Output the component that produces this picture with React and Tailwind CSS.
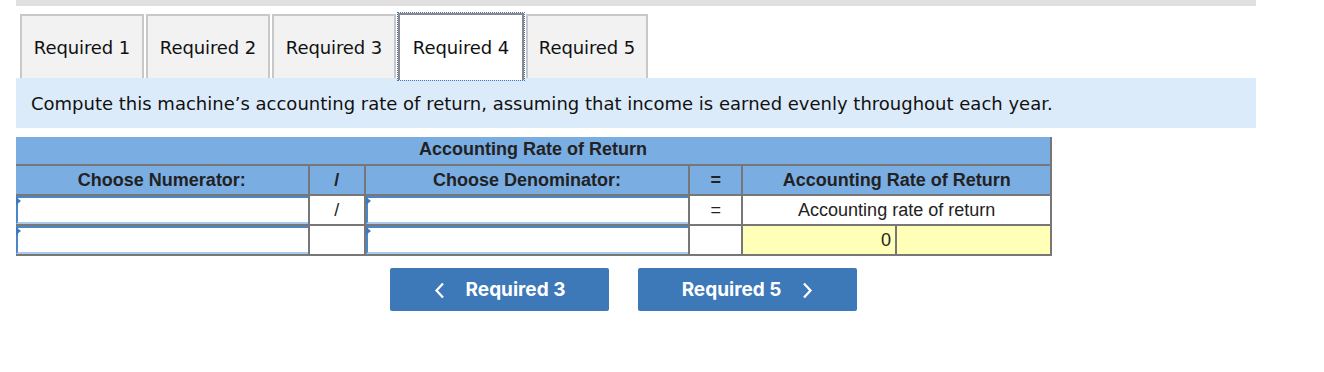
import React from "react";

const tabs = ["Required 1", "Required 2", "Required 3", "Required 4", "Required 5"];
const tabWidths = ["w-[124px]", "w-[124px]", "w-[124px]", "w-[126px]", "w-[122px]"];

function Marker() {
  // little blue triangle on the dropdown cells
  return (
    <span className="absolute left-0 top-[1px] h-0 w-0 border-y-[4px] border-l-[5px] border-y-transparent border-l-[#3d78c0]" />
  );
}

function PickCell({ first }) {
  return (
    <td className={`relative h-[30px] border-2 border-[#777] bg-white p-0 ${first ? "border-l-0" : ""}`}>
      <Marker />
      <div className="h-full w-full border-l-2 border-t-2 border-b-2 border-l-[#4a86c8] border-t-[#4a86c8] border-b-[#a9c8ea]" />
    </td>
  );
}

export default function App() {
  return (
    <div className="h-[372px] w-[1324px] bg-white pl-[16px]">
      <div className="h-[6px] w-[1240px] bg-[#e0e0e0]" />

      {/* Tabs */}
      <div className="mt-[8px] flex gap-[2px] pl-[4px] font-['DejaVu_Sans',Verdana,sans-serif] text-[18px] tracking-[-0.1px] text-[#111]">
        {tabs.map((t, i) =>
          i === 3 ? (
            <div
              key={t}
              className={`relative z-10 -mb-[2px] mt-[-1px] flex h-[67px] items-center justify-center outline-1 outline-dotted outline-[#3d78c8] border-x-2 border-t-2 border-[#888] bg-white ${tabWidths[i]}`}
            >
              {t}
            </div>
          ) : (
            <div
              key={t}
              className={`flex h-[64px] items-center justify-center border-x-2 border-t-2 border-[#c8c8c8] bg-[#f2f2f2] ${tabWidths[i]}`}
            >
              {t}
            </div>
          )
        )}
      </div>

      {/* Instructions */}
      <div className="flex h-[50px] w-[1240px] items-center bg-[#dcebf9] pl-[15px] font-['DejaVu_Sans',Verdana,sans-serif] text-[18px] text-[#111]">
        Compute this machine’s accounting rate of return, assuming that income is earned evenly throughout each year.
      </div>

      {/* Table */}
      <table className="mt-[9px] w-[1036px] border-collapse font-['Liberation_Sans',Arial,sans-serif] text-[18px] leading-none text-[#222]">
        <colgroup>
          <col className="w-[293px]" />
          <col className="w-[56px]" />
          <col className="w-[325px]" />
          <col className="w-[53px]" />
          <col className="w-[154px]" />
          <col className="w-[155px]" />
        </colgroup>
        <tbody>
          <tr className="h-[28px] bg-[#7aade2] font-bold">
            <td colSpan={6} className="border-2 border-[#777] border-l-0 border-t-0 pb-[3px] text-center">
              Accounting Rate of Return
            </td>
          </tr>
          <tr className="h-[30px] bg-[#7aade2] font-bold">
            <td className="border-2 border-[#777] border-l-0 text-center">Choose Numerator:</td>
            <td className="border-2 border-[#777] text-center">/</td>
            <td className="border-2 border-[#777] text-center">Choose Denominator:</td>
            <td className="border-2 border-[#777] text-center">=</td>
            <td colSpan={2} className="border-2 border-[#777] text-center">
              Accounting Rate of Return
            </td>
          </tr>
          <tr>
            <PickCell first />
            <td className="border-2 border-[#777] bg-white text-center">/</td>
            <PickCell />
            <td className="border-2 border-[#777] bg-white text-center">=</td>
            <td colSpan={2} className="border-2 border-[#777] bg-white text-center">
              Accounting rate of return
            </td>
          </tr>
          <tr>
            <PickCell first />
            <td className="border-2 border-[#777] bg-white" />
            <PickCell />
            <td className="border-2 border-[#777] bg-white" />
            <td className="border-2 border-[#777] bg-[#ffffb8] pr-[4px] text-right">0</td>
            <td className="border-2 border-[#777] bg-[#ffffb8]" />
          </tr>
        </tbody>
      </table>

      {/* Nav buttons */}
      <div className="mt-[12px] flex gap-[29px] pl-[374px] font-['Inter',sans-serif] text-[19px] font-bold text-white">
        <button className="flex h-[43px] w-[219px] items-center justify-center gap-[21px] rounded-[2px] bg-[#3d78b8] pt-[2px]">
          <svg width="11" height="17" viewBox="0 0 11 17" fill="none" stroke="white" strokeWidth="2.3">
            <path d="M9 1.5 L2.5 8.5 L9 15.5" />
          </svg>
          Required 3
        </button>
        <button className="flex h-[43px] w-[219px] items-center justify-center gap-[21px] rounded-[2px] bg-[#3d78b8] pt-[2px]">
          Required 5
          <svg width="11" height="17" viewBox="0 0 11 17" fill="none" stroke="white" strokeWidth="2.3">
            <path d="M2 1.5 L8.5 8.5 L2 15.5" />
          </svg>
        </button>
      </div>
    </div>
  );
}
